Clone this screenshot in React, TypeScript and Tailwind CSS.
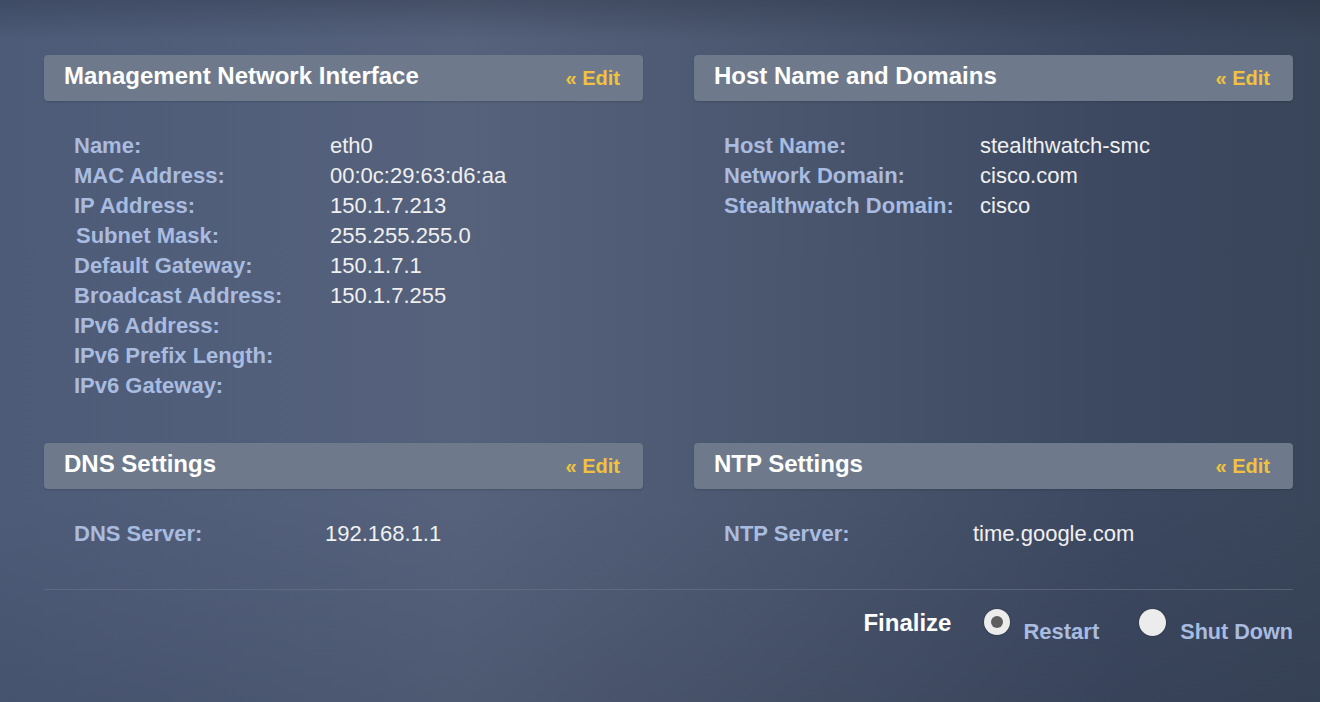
import React from "react";

type Row = { label: string; value?: string; shift?: boolean };

const Header = ({ title }: { title: string }) => (
  <div className="h-[46px] rounded-[4px] bg-[#6e7a8b] pl-[20px] pr-[23px] flex items-center justify-between shadow-[0_1px_2px_rgba(0,0,0,0.15)]">
    <span className="text-[24px] font-bold text-white leading-none pb-[4px]">{title}</span>
    <span className="text-[20px] font-bold text-[#f2c23e] leading-none">« Edit</span>
  </div>
);

const Rows = ({ rows, valueWidth = 256 }: { rows: Row[]; valueWidth?: number }) => (
  <div className="pl-[30px]">
    {rows.map((r) => (
      <div key={r.label} className="flex h-[30px] items-center">
        <div
          className={
            "text-[22px] leading-none font-bold text-[#a9bce0] " +
            (r.shift ? "pl-[2px]" : "")
          }
          style={{ width: valueWidth }}
        >
          {r.label}
        </div>
        <div className="text-[22px] leading-none text-[#f0f0f0]">{r.value ?? ""}</div>
      </div>
    ))}
  </div>
);

export default function App() {
  const mgmt: Row[] = [
    { label: "Name:", value: "eth0" },
    { label: "MAC Address:", value: "00:0c:29:63:d6:aa" },
    { label: "IP Address:", value: "150.1.7.213" },
    { label: "Subnet Mask:", value: "255.255.255.0", shift: true },
    { label: "Default Gateway:", value: "150.1.7.1" },
    { label: "Broadcast Address:", value: "150.1.7.255" },
    { label: "IPv6 Address:" },
    { label: "IPv6 Prefix Length:" },
    { label: "IPv6 Gateway:" },
  ];
  const host: Row[] = [
    { label: "Host Name:", value: "stealthwatch-smc" },
    { label: "Network Domain:", value: "cisco.com" },
    { label: "Stealthwatch Domain:", value: "cisco" },
  ];
  return (
    <div className="relative w-full h-[702px] overflow-hidden font-['Liberation_Sans',Arial,sans-serif] bg-[linear-gradient(to_right,#4d5b78_0%,#56627c_35%,#4a566e_60%,#3c4860_85%,#394559_100%)]">
      <div className="absolute inset-x-0 top-0 h-[40px] bg-[linear-gradient(to_bottom,rgba(30,38,55,0.3),rgba(30,38,55,0))] pointer-events-none" />
      <div className="absolute inset-x-0 bottom-0 h-[200px] bg-[linear-gradient(to_bottom,rgba(30,38,55,0),rgba(30,38,55,0.15))] pointer-events-none" />
      <div className="relative pt-[55px] pl-[44px] w-[1293px]">
        <div className="grid grid-cols-[599px_599px] gap-x-[51px]">
          <div>
            <Header title="Management Network Interface" />
            <div className="mt-[30px]">
              <Rows rows={mgmt} />
            </div>
          </div>
          <div>
            <Header title="Host Name and Domains" />
            <div className="mt-[30px]">
              <Rows rows={host} />
            </div>
          </div>
        </div>
        <div className="grid grid-cols-[599px_599px] gap-x-[51px] mt-[42px]">
          <div>
            <Header title="DNS Settings" />
            <div className="mt-[30px]">
              <Rows rows={[{ label: "DNS Server:", value: "192.168.1.1" }]} valueWidth={251} />
            </div>
          </div>
          <div>
            <Header title="NTP Settings" />
            <div className="mt-[30px]">
              <Rows rows={[{ label: "NTP Server:", value: "time.google.com" }]} valueWidth={249} />
            </div>
          </div>
        </div>
        <div className="mt-[40px] h-px bg-[#6a7588]/60" />
        <div className="flex justify-end items-start pt-[20px]">
          <span className="text-[24px] font-bold text-white leading-none mt-[1px]">Finalize</span>
          <div className="ml-[33px] flex items-start">
            <span className="mt-[-1px] w-[26px] h-[26px] rounded-full bg-[#ececec] flex items-center justify-center shadow-[0_0_2px_rgba(0,0,0,0.4)]">
              <span className="w-[12px] h-[12px] rounded-full bg-[#5e5e5e]" />
            </span>
            <span className="ml-[13px] mt-[11px] text-[22px] font-bold text-[#a9bce0] leading-none">Restart</span>
          </div>
          <div className="ml-[40px] flex items-start">
            <span className="mt-[-1px] w-[27px] h-[27px] rounded-full bg-[#ececec] shadow-[0_0_2px_rgba(0,0,0,0.4)]" />
            <span className="ml-[14px] mt-[11px] text-[21.6px] font-bold text-[#a9bce0] leading-none">Shut Down</span>
          </div>
        </div>
      </div>
    </div>
  );
}
